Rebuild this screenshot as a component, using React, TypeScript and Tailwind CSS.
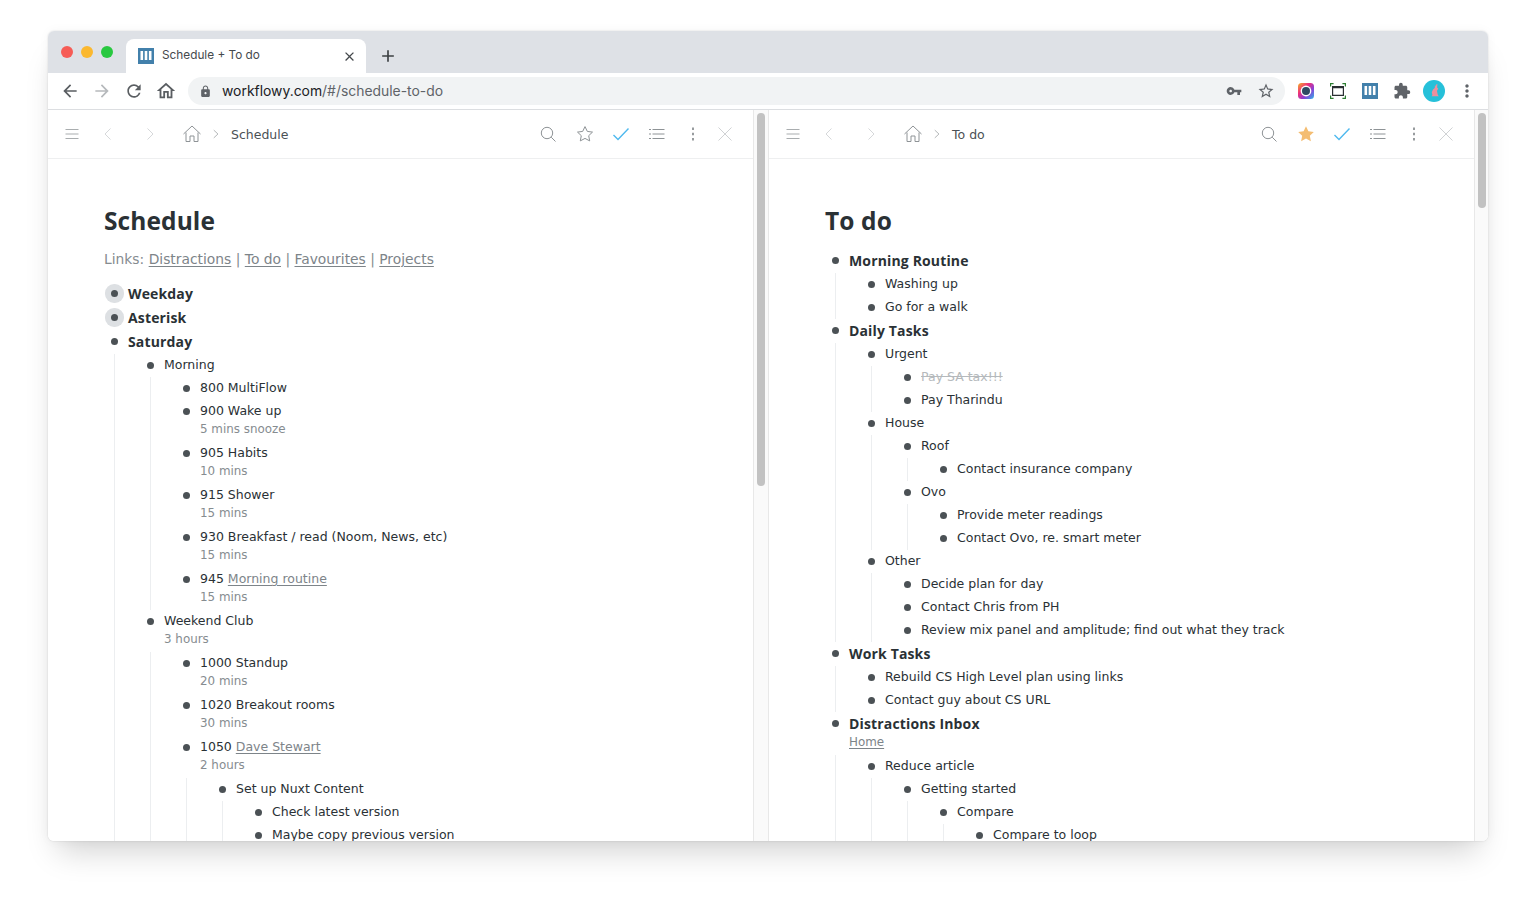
import type { ReactNode } from "react";
import { MdArrowBack, MdArrowForward, MdExtension, MdLock, MdMoreVert, MdOutlineHome, MdRefresh, MdStarBorder, MdVpnKey, MdClose, MdAdd } from "react-icons/md";

type Node = {
  text: ReactNode;
  note?: ReactNode;
  bold?: boolean;
  halo?: boolean;
  kids?: Node[];
};

const Link = ({ children }: { children: ReactNode }) => <span className="text-[#7d8489] underline underline-offset-2">{children}</span>;

const schedule: Node[] = [
  { text: "Weekday", bold: true, halo: true },
  { text: "Asterisk", bold: true, halo: true },
  {
    text: "Saturday",
    bold: true,
    kids: [
      {
        text: "Morning",
        kids: [
          { text: "800 MultiFlow" },
          { text: "900 Wake up", note: "5 mins snooze" },
          { text: "905 Habits", note: "10 mins" },
          { text: "915 Shower", note: "15 mins" },
          { text: "930 Breakfast / read (Noom, News, etc)", note: "15 mins" },
          { text: <>945 <Link>Morning routine</Link></>, note: "15 mins" },
        ],
      },
      {
        text: "Weekend Club",
        note: "3 hours",
        kids: [
          { text: "1000 Standup", note: "20 mins" },
          { text: "1020 Breakout rooms", note: "30 mins" },
          {
            text: <>1050 <Link>Dave Stewart</Link></>,
            note: "2 hours",
            kids: [
              {
                text: "Set up Nuxt Content",
                kids: [{ text: "Check latest version" }, { text: "Maybe copy previous version" }],
              },
            ],
          },
        ],
      },
    ],
  },
];

const todo: Node[] = [
  { text: "Morning Routine", bold: true, kids: [{ text: "Washing up" }, { text: "Go for a walk" }] },
  {
    text: "Daily Tasks",
    bold: true,
    kids: [
      {
        text: "Urgent",
        kids: [{ text: <span className="text-[#b5b9bc] line-through">Pay SA tax!!!</span> }, { text: "Pay Tharindu" }],
      },
      {
        text: "House",
        kids: [
          { text: "Roof", kids: [{ text: "Contact insurance company" }] },
          { text: "Ovo", kids: [{ text: "Provide meter readings" }, { text: "Contact Ovo, re. smart meter" }] },
        ],
      },
      {
        text: "Other",
        kids: [
          { text: "Decide plan for day" },
          { text: "Contact Chris from PH" },
          { text: "Review mix panel and amplitude; find out what they track" },
        ],
      },
    ],
  },
  { text: "Work Tasks", bold: true, kids: [{ text: "Rebuild CS High Level plan using links" }, { text: "Contact guy about CS URL" }] },
  {
    text: "Distractions Inbox",
    bold: true,
    note: <Link>Home</Link>,
    kids: [
      {
        text: "Reduce article",
        kids: [{ text: "Getting started", kids: [{ text: "Compare", kids: [{ text: "Compare to loop" }] }] }],
      },
    ],
  },
];

const Item = ({ node }: { node: Node }) => (
  <div>
    <div className={node.bold ? "flex h-[24px] font-['Open_Sans',sans-serif] text-[14px] font-bold tracking-[0.15px] text-[#2a3135]" : "flex h-[23px] text-[12.5px] text-[#2a3135]"}>
      <span className="mr-[4px] mt-[1px] flex h-[21px] w-[20px] items-center justify-center">
        <span className={node.halo ? "h-[7px] w-[7px] rounded-full bg-[#4b5155] shadow-[0_0_0_6px_#dde0e3]" : "h-[7px] w-[7px] rounded-full bg-[#4b5155]"} />
      </span>
      <span className={node.bold ? "whitespace-nowrap leading-[23px]" : "whitespace-nowrap leading-[22px]"}>{node.text}</span>
    </div>
    {node.note && <div className="ml-[24px] h-[19px] text-[11.9px] leading-[12px] text-[#868c90]">{node.note}</div>}
    {node.kids && (
      <div className="ml-[10px] border-l border-[#eceef0] pl-[25px]">
        {node.kids.map((kid, i) => (
          <Item key={i} node={kid} />
        ))}
      </div>
    )}
  </div>
);

const Thin = ({ children, className }: { children: ReactNode; className: string }) => (
  <svg viewBox="0 0 18 18" fill="none" stroke="currentColor" strokeWidth="1" className={className}>
    {children}
  </svg>
);

const PanelBar = ({ title, starred }: { title: string; starred?: boolean }) => (
  <div className="flex h-[49px] shrink-0 items-center border-b border-[#eeeff0] pl-[15px] pr-[19px]">
    <Thin className="h-[18px] w-[18px] text-[#a9adaf]"><path d="M2.5 4.5h13M2.5 9h13M2.5 13.5h13" /></Thin>
    <Thin className="ml-[18px] h-[18px] w-[18px] text-[#d6d8da]"><path d="M11.5 3.5 6 9l5.5 5.5" /></Thin>
    <Thin className="ml-[24px] h-[18px] w-[18px] text-[#d6d8da]"><path d="M6.5 3.5 12 9l-5.5 5.5" /></Thin>
    <Thin className="ml-[24px] h-[18px] w-[18px] text-[#8e9396]"><path d="M.5 9 9 1l8.5 8M3 7.5V16.5h4v-5.5h4v5.5h4V7.5" /></Thin>
    <Thin className="ml-[10px] h-[10px] w-[10px] text-[#a9adaf]"><path d="M5 2l7.5 7L5 16" strokeWidth="1.6" /></Thin>
    <span className="ml-[10px] pt-[2px] font-['DejaVu_Sans',sans-serif] text-[12.5px] text-[#4b5155]">{title}</span>
    <span className="flex-1" />
    <Thin className="h-[18px] w-[18px] text-[#8e9396]"><circle cx="8" cy="8" r="5.7" /><path d="m12.2 12.2 4.3 4.3" /></Thin>
    {starred ? (
      <svg viewBox="0 0 18 18" className="ml-[19px] h-[18px] w-[18px] text-[#f4bd72]"><path fill="currentColor" d="m9 1.3 2.4 5 5.4.7-4 3.8 1.1 5.4L9 13.6l-4.9 2.6 1.1-5.4-4-3.8 5.4-.7z" /></svg>
    ) : (
      <Thin className="ml-[19px] h-[18px] w-[18px] text-[#8e9396]"><path d="m9 1.6 2.3 4.8 5.2.7-3.8 3.6 1 5.2L9 13.4l-4.7 2.5 1-5.2L1.5 7.1l5.2-.7z" /></Thin>
    )}
    <svg viewBox="0 0 18 18" fill="none" stroke="#4fb9ee" strokeWidth="1.4" className="ml-[18px] h-[18px] w-[18px]"><path d="m1.5 10 4.5 4.5L16.5 3.5" /></svg>
    <Thin className="ml-[18px] h-[18px] w-[18px] text-[#8e9396]"><path d="M4.5 4.5h12M4.5 9h12M4.5 13.5h12M1 4.5h2M1 9h2M1 13.5h2" /></Thin>
    <svg viewBox="0 0 18 18" className="ml-[18px] h-[18px] w-[18px] text-[#7e8386]"><path fill="currentColor" d="M8.2 2.5h1.6v2.4H8.2zM8.2 7.8h1.6v2.4H8.2zM8.2 13.1h1.6v2.4H8.2z" /></svg>
    <Thin className="ml-[14px] h-[18px] w-[18px] text-[#d0d2d4]"><path d="m2.5 2.5 13 13M15.5 2.5l-13 13" /></Thin>
  </div>
);

const Panel = ({ title, starred, children }: { title: string; starred?: boolean; children: ReactNode }) => (
  <div className="flex h-full w-[705px] shrink-0 flex-col overflow-hidden">
    <PanelBar title={title} starred={starred} />
    <div className="pl-[56px] pt-[46px] font-['DejaVu_Sans',sans-serif]">
      <h1 className="h-[32px] pt-[1px] font-['Open_Sans',sans-serif] text-[24.5px] font-bold leading-[30px] tracking-[0.1px] text-[#2a3135]">{title}</h1>
      {children}
    </div>
  </div>
);

const Scrollbar = ({ thumb, last }: { thumb: string; last?: boolean }) => (
  <div className={last ? "h-full w-[14px] shrink-0 border-l border-[#e8e8e8] bg-[#fafafa] pl-[3px] pt-[3px]" : "h-full w-[16px] shrink-0 border-x border-[#e8e8e8] bg-[#fafafa] pl-[3px] pt-[3px]"}>
    <div className={thumb} />
  </div>
);

const Favicon = ({ className }: { className: string }) => (
  <svg viewBox="0 0 16 16" className={className}>
    <rect width="16" height="16" fill="#4280ab" />
    <path fill="#fff" d="M2.5 3h2.6v9H2.5zM6.7 3h2.6v9H6.7zM10.9 3h2.6v9h-2.6z" />
  </svg>
);

const App = () => {
  return (
    <div className="h-[908px] overflow-hidden bg-white px-[48px] pt-[31px]">
      <div className="flex h-[810px] flex-col overflow-hidden rounded-[6px] shadow-[0_0_2px_rgba(0,0,0,0.14),0_0_12px_rgba(0,0,0,0.04),0_20px_30px_-10px_rgba(0,0,0,0.18)]">
        {/* tab strip */}
        <div className="flex h-[42px] shrink-0 items-end bg-[#dee1e6] font-['Inter',sans-serif]">
          <div className="flex h-full w-[78px] items-center gap-[8px] pl-[13px]">
            <span className="h-[12px] w-[12px] rounded-full bg-[#f65c56]" />
            <span className="h-[12px] w-[12px] rounded-full bg-[#fbb82f]" />
            <span className="h-[12px] w-[12px] rounded-full bg-[#28c840]" />
          </div>
          <div className="flex h-[34px] w-[240px] items-center rounded-t-[8px] bg-white pl-[12px] pr-[9px]">
            <Favicon className="h-[16px] w-[16px]" />
            <span className="ml-[8px] flex-1 text-[11.8px] text-[#45494d]">Schedule + To do</span>
            <MdClose className="h-[15px] w-[15px] text-[#45494d]" />
          </div>
          <MdAdd className="mb-[7px] ml-[12px] h-[20px] w-[20px] text-[#3c4043]" />
        </div>
        {/* address bar */}
        <div className="flex h-[37px] shrink-0 items-center border-b border-[#dcdee1] bg-white pl-[12px] pr-[10px] font-['Inter',sans-serif]">
          <MdArrowBack className="h-[20px] w-[20px] text-[#5a5e62]" />
          <MdArrowForward className="ml-[12px] h-[20px] w-[20px] text-[#b6b9bc]" />
          <MdRefresh className="ml-[12px] h-[20px] w-[20px] text-[#5a5e62]" />
          <MdOutlineHome className="ml-[11px] h-[22px] w-[22px] text-[#5a5e62]" />
          <div className="ml-[11px] flex h-[28px] w-[1097px] items-center rounded-full bg-[#f1f3f4] pl-[11px] pr-[10px] text-[13.9px]">
            <MdLock className="h-[13px] w-[13px] text-[#5f6368]" />
            <span className="ml-[10px] flex-1 text-[#202124]">workflowy.com<span className="text-[#5f6368]">/#/schedule-to-do</span></span>
            <MdVpnKey className="h-[16px] w-[16px] text-[#5f6368]" />
            <MdStarBorder className="ml-[15px] h-[18px] w-[18px] text-[#5f6368]" />
          </div>
          <svg viewBox="0 0 16 16" className="ml-[13px] h-[16px] w-[16px] shrink-0">
            <defs>
              <linearGradient id="rainbow" x1="0" y1="0" x2="1" y2="1">
                <stop offset="0" stopColor="#f5b324" />
                <stop offset=".35" stopColor="#ef2f7a" />
                <stop offset=".65" stopColor="#8a3fd6" />
                <stop offset="1" stopColor="#2bb8e8" />
              </linearGradient>
            </defs>
            <rect width="16" height="16" rx="3.5" fill="url(#rainbow)" />
            <circle cx="8" cy="8" r="5.4" fill="#fff" />
            <circle cx="8" cy="8" r="4" fill="#2e4a63" />
          </svg>
          <svg viewBox="0 0 16 16" fill="none" className="ml-[16px] h-[16px] w-[16px] shrink-0">
            <path stroke="#2d7d32" strokeWidth="1.2" d="M.6 3.5V.6h3M12.4.6h3v2.9M.6 12.5v2.9h3M12.4 15.4h3v-2.9" />
            <path stroke="#2b2f33" strokeWidth="1.2" d="M2.6 3.6h10.8v8.8H2.6z" />
            <path fill="#2b2f33" d="M2.6 3.6h10.8v1.6H2.6z" />
          </svg>
          <Favicon className="ml-[16px] h-[16px] w-[16px] shrink-0" />
          <MdExtension className="ml-[15px] h-[18px] w-[18px] shrink-0 text-[#5f6368]" />
          <svg viewBox="0 0 22 22" className="ml-[12px] h-[22px] w-[22px] shrink-0">
            <circle cx="11" cy="11" r="11" fill="#26c0d9" />
            <path fill="#ee8f9e" d="M12 4.5l.7 2 .9-2.6.8.3-.3 3.3 1.2 1.2-.9 1.2-.4 1 .7 3.6 1 1.7H8.6l.8-1.3-.6-2.6 1.2-2.8 1.8-1.6z" />
          </svg>
          <MdMoreVert className="ml-[12px] h-[20px] w-[20px] shrink-0 text-[#5f6368]" />
        </div>
        {/* split view */}
        <div className="flex min-h-0 flex-1 bg-white">
          <Panel title="Schedule">
            <div className="mt-[12px] h-[22px] text-[13.85px] leading-[21px] text-[#868c90]">
              Links: <Link>Distractions</Link> | <Link>To do</Link> | <Link>Favourites</Link> | <Link>Projects</Link>
            </div>
            <div className="mt-[11px]">
              {schedule.map((node, i) => (
                <Item key={i} node={node} />
              ))}
            </div>
          </Panel>
          <Scrollbar thumb="h-[373px] w-[8px] rounded-full bg-[#c2c2c2]" />
          <Panel title="To do" starred>
            <div className="mt-[12px]">
              {todo.map((node, i) => (
                <Item key={i} node={node} />
              ))}
            </div>
          </Panel>
          <Scrollbar last thumb="h-[95px] w-[8px] rounded-full bg-[#c2c2c2]" />
        </div>
      </div>
    </div>
  );
};

export default App;
